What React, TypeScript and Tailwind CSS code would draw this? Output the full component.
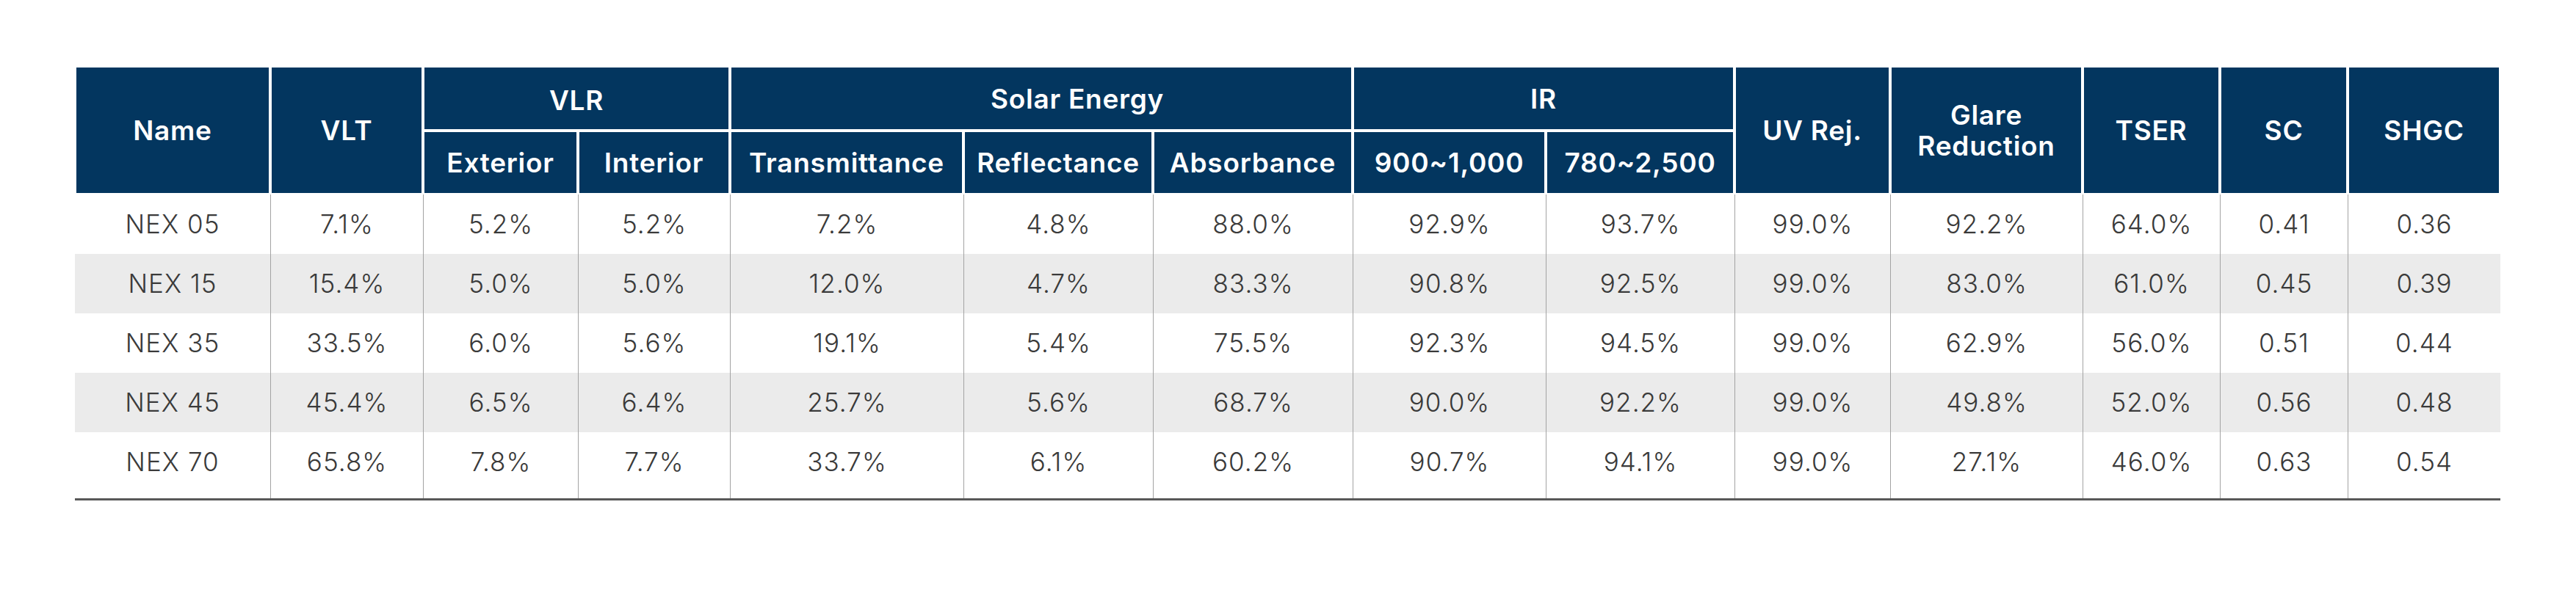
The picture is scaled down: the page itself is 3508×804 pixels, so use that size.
const COLS =
  'grid grid-cols-[266px_208px_211px_207px_318px_258px_272px_263px_257px_212px_262px_187px_174px_208px]'

type Row = { name: string; values: string[] }

const ROWS: Row[] = [
  { name: 'NEX 05', values: ['7.1%', '5.2%', '5.2%', '7.2%', '4.8%', '88.0%', '92.9%', '93.7%', '99.0%', '92.2%', '64.0%', '0.41', '0.36'] },
  { name: 'NEX 15', values: ['15.4%', '5.0%', '5.0%', '12.0%', '4.7%', '83.3%', '90.8%', '92.5%', '99.0%', '83.0%', '61.0%', '0.45', '0.39'] },
  { name: 'NEX 35', values: ['33.5%', '6.0%', '5.6%', '19.1%', '5.4%', '75.5%', '92.3%', '94.5%', '99.0%', '62.9%', '56.0%', '0.51', '0.44'] },
  { name: 'NEX 45', values: ['45.4%', '6.5%', '6.4%', '25.7%', '5.6%', '68.7%', '90.0%', '92.2%', '99.0%', '49.8%', '52.0%', '0.56', '0.48'] },
  { name: 'NEX 70', values: ['65.8%', '7.8%', '7.7%', '33.7%', '6.1%', '60.2%', '90.7%', '94.1%', '99.0%', '27.1%', '46.0%', '0.63', '0.54'] },
]

// 헤더 셀 — 남색 바탕, 흰 테두리로 칸 사이 간격
function Th({ children, className = '' }: { children: React.ReactNode; className?: string }) {
  return (
    <div
      className={`flex items-center justify-center border-2 border-white bg-[#03365f] text-center text-[37px] leading-[1.13] font-semibold tracking-[0.02em] text-white ${className}`}
    >
      {children}
    </div>
  )
}

export default function App() {
  return (
    <div className="min-h-[804px] bg-white font-['Inter','Liberation_Sans',sans-serif]">
      <div className="ml-[102px] w-[3303px] pt-[90px]">
        {/* 헤더 */}
        <div className={`${COLS} grid-rows-[88px_87px]`}>
          <Th className="row-span-2">Name</Th>
          <Th className="row-span-2">VLT</Th>
          <Th className="col-span-2 pt-[6px]">VLR</Th>
          <Th className="col-span-3 pt-[2px] pl-[98px]">Solar Energy</Th>
          <Th className="col-span-2 pt-[2px]">IR</Th>
          <Th className="row-span-2">UV Rej.</Th>
          <Th className="row-span-2">
            Glare
            <br />
            Reduction
          </Th>
          <Th className="row-span-2">TSER</Th>
          <Th className="row-span-2">SC</Th>
          <Th className="row-span-2">SHGC</Th>
          <Th>Exterior</Th>
          <Th>Interior</Th>
          <Th>Transmittance</Th>
          <Th>Reflectance</Th>
          <Th>Absorbance</Th>
          <Th>900~1,000</Th>
          <Th>780~2,500</Th>
        </div>

        {/* 본문 */}
        <div className="border-b-[3px] border-[#585858]">
          {ROWS.map((r, i) => {
            const last = i === ROWS.length - 1
            return (
              <div className={`${COLS} ${i % 2 ? 'bg-[#ebebeb]' : 'bg-white'}`} key={r.name}>
                {[r.name, ...r.values].map((v, j) => (
                  <div
                    className={`flex items-center justify-center text-[35px] font-light tracking-[0.03em] text-[#3a3a3a] ${
                      last ? 'h-[90px] pb-[9px]' : 'h-[81px]'
                    } ${j ? 'border-l border-[#a3a3a3]' : ''}`}
                    key={j}
                  >
                    {v}
                  </div>
                ))}
              </div>
            )
          })}
        </div>
      </div>
    </div>
  )
}
